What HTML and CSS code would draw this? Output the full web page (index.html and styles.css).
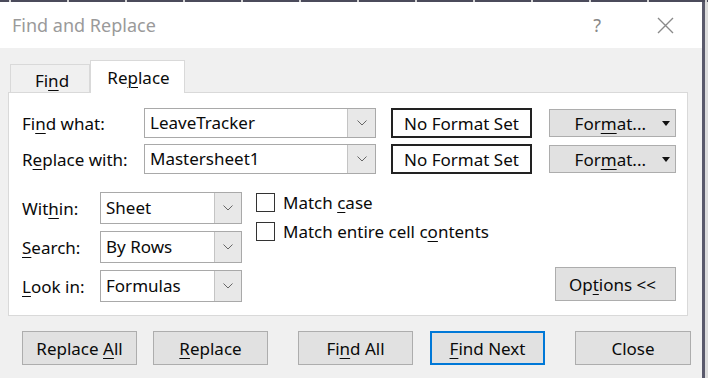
FILE: index.html
```html
<!DOCTYPE html>
<html lang="en">
<head>
    <meta charset="UTF-8">
    <meta name="viewport" content="width=device-width, initial-scale=1.0">
    <title>Find and Replace</title>
    <link rel="stylesheet" href="styles.css">
</head>
<body>
    <div class="sheet-grid"></div>
    <div class="window">
      <div class="dialog">
        <div class="titlebar">
          <span class="title">Find and Replace</span>
          <span class="help">?</span>
          <svg class="close-x" width="17" height="17" viewBox="0 0 17 17">
            <path d="M1 1 L16 16 M16 1 L1 16" stroke="#8a8a8a" stroke-width="1.4" fill="none"/>
          </svg>
        </div>

        <div class="content">
          <div class="tabs">
            <div class="tab">Fi<u>n</u>d</div>
            <div class="tab active">Re<u>p</u>lace</div>
          </div>

          <div class="panel">
            <div class="field-row">
              <label class="lbl-wide">Fi<u>n</u>d what:</label>
              <div class="combo">
                <span class="combo-text">LeaveTracker</span>
                <span class="drop wide"><svg width="10" height="6" viewBox="0 0 10 6"><path d="M0.5 0.5 L5 5 L9.5 0.5" stroke="#666" fill="none"/></svg></span>
              </div>
              <div class="fmt-box">No Format Set</div>
              <button class="fmt-btn"><span>For<u>m</u>at...</span><span class="caret"></span></button>
            </div>
            <div class="field-row">
              <label class="lbl-wide">R<u>e</u>place with:</label>
              <div class="combo">
                <span class="combo-text">Mastersheet1</span>
                <span class="drop wide"><svg width="10" height="6" viewBox="0 0 10 6"><path d="M0.5 0.5 L5 5 L9.5 0.5" stroke="#666" fill="none"/></svg></span>
              </div>
              <div class="fmt-box">No Format Set</div>
              <button class="fmt-btn"><span>For<u>m</u>at...</span><span class="caret"></span></button>
            </div>

            <div class="lower">
              <div class="selects">
                <div class="sel-row">
                  <label class="lbl-narrow">Wit<u>h</u>in:</label>
                  <div class="select">
                    <span class="combo-text">Sheet</span>
                    <span class="drop"><svg width="10" height="6" viewBox="0 0 10 6"><path d="M0.5 0.5 L5 5 L9.5 0.5" stroke="#666" fill="none"/></svg></span>
                  </div>
                </div>
                <div class="sel-row">
                  <label class="lbl-narrow"><u>S</u>earch:</label>
                  <div class="select">
                    <span class="combo-text">By Rows</span>
                    <span class="drop"><svg width="10" height="6" viewBox="0 0 10 6"><path d="M0.5 0.5 L5 5 L9.5 0.5" stroke="#666" fill="none"/></svg></span>
                  </div>
                </div>
                <div class="sel-row">
                  <label class="lbl-narrow"><u>L</u>ook in:</label>
                  <div class="select">
                    <span class="combo-text">Formulas</span>
                    <span class="drop"><svg width="10" height="6" viewBox="0 0 10 6"><path d="M0.5 0.5 L5 5 L9.5 0.5" stroke="#666" fill="none"/></svg></span>
                  </div>
                </div>
              </div>

              <div class="checks">
                <div class="check-row"><span class="box"></span><span>Match <u>c</u>ase</span></div>
                <div class="check-row"><span class="box"></span><span>Match entire cell c<u>o</u>ntents</span></div>
                <button class="btn options-btn">Op<u>t</u>ions &lt;&lt;</button>
              </div>
            </div>
          </div>

          <div class="actions">
            <button class="btn">Replace <u>A</u>ll</button>
            <button class="btn"><u>R</u>eplace</button>
            <button class="btn wide-gap">Fi<u>n</u>d All</button>
            <button class="btn default"><u>F</u>ind Next</button>
            <button class="btn wide-gap close-btn">Close</button>
          </div>
        </div>
      </div>
      <div class="edge"></div>
    </div>
</body>
</html>
```

FILE: styles.css
```css
/* Page */
body {
  margin: 0;
  width: 708px;
  height: 378px;
  overflow: hidden;
  background-color: #dcdcdc;
  font-family: "Noto Sans", "Open Sans", sans-serif;
  font-size: 17px;
  color: #0a0a0a;
}

u {
  text-underline-offset: 3px;
  text-decoration-thickness: 1px;
}

/* Spreadsheet showing behind the dialog */
.sheet-grid {
  height: 2px;
  background: repeating-linear-gradient(90deg, #d6d6d6 0 2px, #4b4b5b 2px 58px);
  background-position: 9px 0;
}

.window {
  display: flex;
  height: 376px;
}

.dialog {
  width: 702px;
  display: flex;
  flex-direction: column;
  background-color: #f0f0f0;
}

.edge {
  width: 3px;
  background-color: #5a5a6c;
}

/* Title bar */
.titlebar {
  height: 46px;
  background-color: #fff;
  display: flex;
  align-items: center;
  padding-left: 12px;
}

.title {
  font-size: 18px;
  color: #9a9a9a;
  flex: 1;
}

.help {
  font-size: 18px;
  color: #888;
  margin-right: 56px;
}

.close-x {
  margin-right: 28px;
}

/* Body */
.content {
  flex: 1;
  padding-top: 12px;
}

.tabs {
  display: flex;
  align-items: flex-end;
  margin-left: 10px;
  height: 32px;
}

.tab {
  width: 80px;
  height: 28px;
  border: 1px solid #d9d9d9;
  border-bottom: none;
  display: flex;
  justify-content: center;
  align-items: center;
  box-sizing: border-box;
  padding-top: 4px;
  padding-left: 4px;
}

.tab.active {
  width: 95px;
  height: 33px;
  background-color: #fff;
  margin-bottom: -1px;
  position: relative;
  z-index: 1;
  padding-top: 0;
  padding-left: 2px;
}

.panel {
  margin-left: 8px;
  width: 680px;
  height: 224px;
  box-sizing: border-box;
  background-color: #fff;
  border: 1px solid #d9d9d9;
  padding: 15px 11px 14px 13px;
}

/* Find / Replace rows */
.field-row {
  display: flex;
  align-items: center;
  height: 30px;
  margin-bottom: 6px;
}

.lbl-wide {
  width: 122px;
}

.combo, .select {
  display: flex;
  height: 30px;
  box-sizing: border-box;
  border: 1px solid #a9a9a9;
  background-color: #fff;
}

.combo {
  width: 232px;
}

.combo-text {
  flex: 1;
  padding-left: 5px;
  line-height: 28px;
}

.drop {
  width: 26px;
  background-color: #e8e8e8;
  border-left: 1px solid #c4c4c4;
  display: flex;
  align-items: center;
  justify-content: center;
}

.drop.wide {
  width: 27px;
}

.fmt-box {
  width: 141px;
  height: 30px;
  box-sizing: border-box;
  border: 2px solid #222;
  margin-left: 15px;
  display: flex;
  align-items: center;
  justify-content: center;
}

/* Buttons */
button {
  font-family: inherit;
  font-size: 17px;
  color: #0a0a0a;
  background-color: #e1e1e1;
  border: 1px solid #adadad;
  padding: 0;
}

.fmt-btn {
  width: 127px;
  height: 28px;
  margin-left: 17px;
  display: flex;
  align-items: center;
  justify-content: flex-end;
  padding-right: 5px;
}

.caret {
  width: 0;
  height: 0;
  border-left: 4px solid transparent;
  border-right: 4px solid transparent;
  border-top: 5px solid #111;
  margin-left: 16px;
}

/* Lower part of the panel */
.lower {
  display: flex;
  margin-top: 18px;
}

.selects {
  display: flex;
  flex-direction: column;
  gap: 7px;
}

.sel-row {
  display: flex;
  align-items: center;
}

.lbl-narrow {
  width: 78px;
}

.select {
  width: 142px;
  height: 32px;
}

.select .combo-text {
  line-height: 30px;
}

.checks {
  flex: 1;
  margin-left: 14px;
  display: flex;
  flex-direction: column;
}

.check-row {
  display: flex;
  align-items: center;
  height: 29px;
  margin-top: -4px;
  margin-bottom: 4px;
}

.box {
  width: 19px;
  height: 19px;
  box-sizing: border-box;
  border: 1px solid #333;
  background-color: #fff;
  margin-right: 8px;
}

.btn {
  width: 115px;
  height: 34px;
}

.options-btn {
  width: 121px;
  margin-top: auto;
  align-self: flex-end;
  margin-bottom: 1px;
  padding-right: 6px;
}

.actions {
  display: flex;
  gap: 16px;
  padding-left: 22px;
  margin-top: 15px;
}

.btn.wide-gap {
  margin-left: 14px;
}

.btn.default {
  border: 2px solid #0078d7;
  margin-left: 1px;
}

.close-btn {
  width: 116px;
}
```
